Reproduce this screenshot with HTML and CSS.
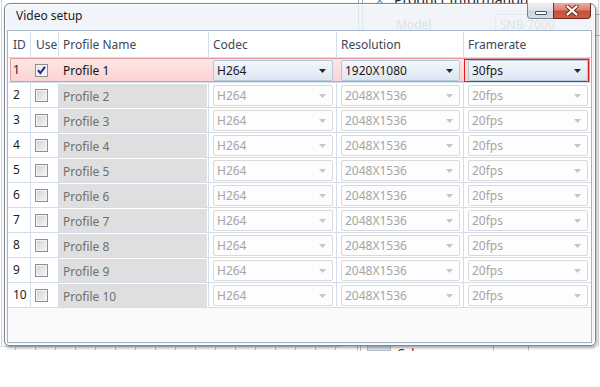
FILE: index.html
```html
<!DOCTYPE html>
<html>
<head>
<meta charset="utf-8">
<title>Video setup</title>
<link rel="stylesheet" href="styles.css">
</head>
<body>
<div class="backdrop">
  <div class="bd-vline bd-v1"></div>
  <div class="bd-vline bd-v2"></div>
  <div class="bd-vline bd-left"></div>
  <div class="bd-vline bd-right"></div>
  <div class="bd-x">×</div>
  <div class="bd-title">Product Information</div>
  <div class="bd-model">Model</div>
  <div class="bd-input">SNB-7000</div>
  <div class="bd-ruler"></div>
  <div class="bd-vline bd-b1"></div>
  <div class="bd-vline bd-b2"></div>
  <div class="bd-box"></div>
  <div class="bd-cal"><span>Cal</span></div>
  <div class="bd-vline bd-b3"></div>
  <div class="bd-vline bd-b4"></div>
</div>

<div class="window">
  <div class="titlebar"><span class="title">Video setup</span></div>
  <div class="caption">
    <div class="cap-btn cap-min"><span class="min-glyph"></span></div>
    <div class="cap-btn cap-close">
      <svg width="14" height="11" viewBox="0 0 14 11"><path d="M2.5 1.5 L11.5 9.5 M11.5 1.5 L2.5 9.5" stroke="#6a2a22" stroke-width="4" stroke-linecap="round"/><path d="M2.5 1.5 L11.5 9.5 M11.5 1.5 L2.5 9.5" stroke="#ffffff" stroke-width="2.2" stroke-linecap="round"/></svg>
    </div>
  </div>
  <div class="client">
    <div class="row head">
      <div class="c c-id">ID</div>
      <div class="c c-use">Use</div>
      <div class="c c-name"><span class="hname">Profile Name</span></div>
      <div class="c c-codec"><span class="hname">Codec</span></div>
      <div class="c c-res"><span class="hname">Resolution</span></div>
      <div class="c c-fps"><span class="hname">Framerate</span></div>
    </div>

    <div class="row sel">
      <div class="c c-id">1</div>
      <div class="c c-use"><span class="cb checked"><svg width="11" height="11" viewBox="0 0 11 11"><path d="M2 5.2 L4.3 8.2 L9 1.8" fill="none" stroke="#1f2a86" stroke-width="2"/></svg></span></div>
      <div class="c c-name"><span class="name-text">Profile 1</span></div>
      <div class="c c-codec"><div class="combo on"><span>H264</span><svg class="arr" width="7" height="4" viewBox="0 0 7 4"><path d="M0 0H7L3.5 4Z"/></svg></div></div>
      <div class="c c-res"><div class="combo on"><span>1920X1080</span><svg class="arr" width="7" height="4" viewBox="0 0 7 4"><path d="M0 0H7L3.5 4Z"/></svg></div></div>
      <div class="c c-fps focus"><div class="combo on"><span>30fps</span><svg class="arr" width="7" height="4" viewBox="0 0 7 4"><path d="M0 0H7L3.5 4Z"/></svg></div></div>
    </div>

    <div class="row">
      <div class="c c-id">2</div>
      <div class="c c-use"><span class="cb"></span></div>
      <div class="c c-name"><span class="name-box">Profile 2</span></div>
      <div class="c c-codec"><div class="combo"><span>H264</span><svg class="arr" width="7" height="4" viewBox="0 0 7 4"><path d="M0 0H7L3.5 4Z"/></svg></div></div>
      <div class="c c-res"><div class="combo"><span>2048X1536</span><svg class="arr" width="7" height="4" viewBox="0 0 7 4"><path d="M0 0H7L3.5 4Z"/></svg></div></div>
      <div class="c c-fps"><div class="combo"><span>20fps</span><svg class="arr" width="7" height="4" viewBox="0 0 7 4"><path d="M0 0H7L3.5 4Z"/></svg></div></div>
    </div>
    <div class="row">
      <div class="c c-id">3</div>
      <div class="c c-use"><span class="cb"></span></div>
      <div class="c c-name"><span class="name-box">Profile 3</span></div>
      <div class="c c-codec"><div class="combo"><span>H264</span><svg class="arr" width="7" height="4" viewBox="0 0 7 4"><path d="M0 0H7L3.5 4Z"/></svg></div></div>
      <div class="c c-res"><div class="combo"><span>2048X1536</span><svg class="arr" width="7" height="4" viewBox="0 0 7 4"><path d="M0 0H7L3.5 4Z"/></svg></div></div>
      <div class="c c-fps"><div class="combo"><span>20fps</span><svg class="arr" width="7" height="4" viewBox="0 0 7 4"><path d="M0 0H7L3.5 4Z"/></svg></div></div>
    </div>
    <div class="row">
      <div class="c c-id">4</div>
      <div class="c c-use"><span class="cb"></span></div>
      <div class="c c-name"><span class="name-box">Profile 4</span></div>
      <div class="c c-codec"><div class="combo"><span>H264</span><svg class="arr" width="7" height="4" viewBox="0 0 7 4"><path d="M0 0H7L3.5 4Z"/></svg></div></div>
      <div class="c c-res"><div class="combo"><span>2048X1536</span><svg class="arr" width="7" height="4" viewBox="0 0 7 4"><path d="M0 0H7L3.5 4Z"/></svg></div></div>
      <div class="c c-fps"><div class="combo"><span>20fps</span><svg class="arr" width="7" height="4" viewBox="0 0 7 4"><path d="M0 0H7L3.5 4Z"/></svg></div></div>
    </div>
    <div class="row">
      <div class="c c-id">5</div>
      <div class="c c-use"><span class="cb"></span></div>
      <div class="c c-name"><span class="name-box">Profile 5</span></div>
      <div class="c c-codec"><div class="combo"><span>H264</span><svg class="arr" width="7" height="4" viewBox="0 0 7 4"><path d="M0 0H7L3.5 4Z"/></svg></div></div>
      <div class="c c-res"><div class="combo"><span>2048X1536</span><svg class="arr" width="7" height="4" viewBox="0 0 7 4"><path d="M0 0H7L3.5 4Z"/></svg></div></div>
      <div class="c c-fps"><div class="combo"><span>20fps</span><svg class="arr" width="7" height="4" viewBox="0 0 7 4"><path d="M0 0H7L3.5 4Z"/></svg></div></div>
    </div>
    <div class="row">
      <div class="c c-id">6</div>
      <div class="c c-use"><span class="cb"></span></div>
      <div class="c c-name"><span class="name-box">Profile 6</span></div>
      <div class="c c-codec"><div class="combo"><span>H264</span><svg class="arr" width="7" height="4" viewBox="0 0 7 4"><path d="M0 0H7L3.5 4Z"/></svg></div></div>
      <div class="c c-res"><div class="combo"><span>2048X1536</span><svg class="arr" width="7" height="4" viewBox="0 0 7 4"><path d="M0 0H7L3.5 4Z"/></svg></div></div>
      <div class="c c-fps"><div class="combo"><span>20fps</span><svg class="arr" width="7" height="4" viewBox="0 0 7 4"><path d="M0 0H7L3.5 4Z"/></svg></div></div>
    </div>
    <div class="row">
      <div class="c c-id">7</div>
      <div class="c c-use"><span class="cb"></span></div>
      <div class="c c-name"><span class="name-box">Profile 7</span></div>
      <div class="c c-codec"><div class="combo"><span>H264</span><svg class="arr" width="7" height="4" viewBox="0 0 7 4"><path d="M0 0H7L3.5 4Z"/></svg></div></div>
      <div class="c c-res"><div class="combo"><span>2048X1536</span><svg class="arr" width="7" height="4" viewBox="0 0 7 4"><path d="M0 0H7L3.5 4Z"/></svg></div></div>
      <div class="c c-fps"><div class="combo"><span>20fps</span><svg class="arr" width="7" height="4" viewBox="0 0 7 4"><path d="M0 0H7L3.5 4Z"/></svg></div></div>
    </div>
    <div class="row">
      <div class="c c-id">8</div>
      <div class="c c-use"><span class="cb"></span></div>
      <div class="c c-name"><span class="name-box">Profile 8</span></div>
      <div class="c c-codec"><div class="combo"><span>H264</span><svg class="arr" width="7" height="4" viewBox="0 0 7 4"><path d="M0 0H7L3.5 4Z"/></svg></div></div>
      <div class="c c-res"><div class="combo"><span>2048X1536</span><svg class="arr" width="7" height="4" viewBox="0 0 7 4"><path d="M0 0H7L3.5 4Z"/></svg></div></div>
      <div class="c c-fps"><div class="combo"><span>20fps</span><svg class="arr" width="7" height="4" viewBox="0 0 7 4"><path d="M0 0H7L3.5 4Z"/></svg></div></div>
    </div>
    <div class="row">
      <div class="c c-id">9</div>
      <div class="c c-use"><span class="cb"></span></div>
      <div class="c c-name"><span class="name-box">Profile 9</span></div>
      <div class="c c-codec"><div class="combo"><span>H264</span><svg class="arr" width="7" height="4" viewBox="0 0 7 4"><path d="M0 0H7L3.5 4Z"/></svg></div></div>
      <div class="c c-res"><div class="combo"><span>2048X1536</span><svg class="arr" width="7" height="4" viewBox="0 0 7 4"><path d="M0 0H7L3.5 4Z"/></svg></div></div>
      <div class="c c-fps"><div class="combo"><span>20fps</span><svg class="arr" width="7" height="4" viewBox="0 0 7 4"><path d="M0 0H7L3.5 4Z"/></svg></div></div>
    </div>
    <div class="row">
      <div class="c c-id">10</div>
      <div class="c c-use"><span class="cb"></span></div>
      <div class="c c-name"><span class="name-box">Profile 10</span></div>
      <div class="c c-codec"><div class="combo"><span>H264</span><svg class="arr" width="7" height="4" viewBox="0 0 7 4"><path d="M0 0H7L3.5 4Z"/></svg></div></div>
      <div class="c c-res"><div class="combo"><span>2048X1536</span><svg class="arr" width="7" height="4" viewBox="0 0 7 4"><path d="M0 0H7L3.5 4Z"/></svg></div></div>
      <div class="c c-fps"><div class="combo"><span>20fps</span><svg class="arr" width="7" height="4" viewBox="0 0 7 4"><path d="M0 0H7L3.5 4Z"/></svg></div></div>
    </div>
  </div>
</div>
</body>
</html>
```

FILE: styles.css
```css
* { box-sizing: border-box; margin: 0; padding: 0; }
html, body { width: 600px; height: 387px; overflow: hidden; }
body {
  position: relative;
  background: #ffffff;
  font-family: "Noto Sans", "Open Sans", sans-serif;
  font-size: 12px;
  color: #1e1e1e;
  padding: 3px 0 0 4px;
}

/* ---------- application behind the dialog ---------- */
.backdrop { position: absolute; left: 0; top: 0; width: 600px; height: 387px; z-index: 0; }
.bd-vline { position: absolute; width: 1px; background: #c9ced6; }
.bd-v1 { left: 358px; top: 0; height: 30px; background: #9aa6b6; }
.bd-v2 { left: 362px; top: 0; height: 30px; background: #9aa6b6; }
.bd-left { left: 1px; top: 0; height: 346px; background: #cfd3d8; }
.bd-right { left: 598px; top: 0; height: 346px; background: #d6d9de; }
.bd-x { position: absolute; left: 376px; top: -9px; font-size: 13px; color: #5a7db0; }
.bd-title { position: absolute; left: 394px; top: -10px; font-size: 14px; color: #2a2a2a; }
.bd-model { position: absolute; left: 396px; top: 17px; font-size: 12px; color: #7d7d7d; line-height: 16px; }
.bd-input {
  position: absolute; left: 495px; top: 14px; width: 110px; height: 22px;
  border: 1px solid #b9bec6; padding: 2px 0 0 4px; font-size: 12px; line-height: 16px; color: #8a8a8a;
}
.bd-ruler {
  position: absolute; left: 0; top: 346px; width: 342px; height: 4px;
  border-top: 1px solid #e2e2e2;
  background: repeating-linear-gradient(90deg, transparent 0 15px, #c4c4c4 15px 16px, transparent 16px 20px);
}
.bd-b1 { left: 357px; top: 345px; height: 6px; background: #b8c2d0; }
.bd-b2 { left: 360px; top: 345px; height: 6px; background: #b8c2d0; }
.bd-box { position: absolute; left: 367px; top: 345px; width: 24px; height: 6px; background: #dfe6ef; border: 1px solid #b8c2d0; border-top: none; }
.bd-cal { position: absolute; left: 397px; top: 346px; height: 5px; overflow: hidden; font-size: 12px; line-height: 16px; color: #333; }
.bd-cal span { display: block; margin-top: 0; }
.bd-b3 { left: 493px; top: 345px; height: 6px; background: #b8c2d0; }
.bd-b4 { left: 528px; top: 345px; height: 6px; background: #b8c2d0; }

/* ---------- dialog window ---------- */
.window {
  position: relative;
  z-index: 1;
  width: 592px;
  height: 343px;
  border: 1px solid #7d8691;
  border-radius: 6px 6px 5px 5px;
  background: rgba(238, 242, 247, 0.84);
  box-shadow: 1px 2px 3px rgba(0, 0, 0, 0.35), inset 0 0 0 1px rgba(255, 255, 255, 0.85);
  padding: 0 3px 2px 2px;
  display: flex;
  flex-direction: column;
}
.titlebar { height: 26px; padding: 4px 0 0 9px; line-height: 16px; }
.title { font-size: 12px; color: #1b1b1b; }

.caption { position: absolute; top: -1px; right: 4px; display: flex; height: 16px; }
.cap-btn { height: 16px; display: flex; align-items: center; justify-content: center; }
.cap-min {
  width: 26px;
  border: 1px solid #7a838e;
  border-top: none;
  border-right: none;
  border-radius: 0 0 0 4px;
  background: linear-gradient(#eef1f5, #dde2e8 50%, #cbd2db 51%, #d8dee5);
}
.min-glyph {
  width: 12px; height: 4px; margin-top: 5px;
  background: #ffffff; border: 1px solid #4b525b; border-radius: 1px;
}
.cap-close {
  width: 38px;
  border: 1px solid #6d2a22;
  border-top: none;
  border-radius: 0 0 4px 0;
  background: linear-gradient(#e9ad9f, #d88371 45%, #c75039 55%, #cc5d44);
}
.cap-close svg { display: block; }

.client {
  width: 585px;
  height: 313px;
  border: 1px solid #a4b4c9;
  background: #fafafa;
  display: flex;
  flex-direction: column;
}

/* ---------- grid ---------- */
.row {
  position: relative;
  display: flex;
  flex: none;
  height: 25px;
  border-bottom: 1px solid #d2deec;
  background: #ffffff;
  line-height: 16px;
}
.row.head { height: 27px; color: #3d4756; padding-top: 1px; }
.c {
  position: relative;
  z-index: 1;
  display: flex;
  align-items: center;
  border-right: 1px solid #d2deec;
  white-space: nowrap;
}
.c-id { width: 23px; padding-left: 5px; }
.c-use { width: 28px; padding-left: 4px; }
.head .c-use { padding-left: 5px; }
.c-name { width: 150px; }
.c-codec { width: 128px; }
.c-res { width: 127px; }
.c-fps { width: 127px; border-right: none; }
.hname { padding-left: 4px; }

.row.sel::before {
  content: "";
  position: absolute;
  left: 2px; right: 1px; top: 0; bottom: 0;
  background: linear-gradient(#fde6e6, #fbd3d3);
  border: 1px solid #e29a9a;
  z-index: 0;
}
.row.sel .c { border-right-color: transparent; }
.c-fps.focus::after {
  content: "";
  position: absolute;
  left: 0; right: 2px; top: 1px; bottom: 0;
  border: 1px solid #e41b1b;
  pointer-events: none;
}

.name-text { padding-left: 4px; color: #151515; padding-top: 2px; }
.name-box {
  align-self: flex-start;
  margin-top: 1px;
  width: 148px;
  height: 23px;
  background: #dfdfdf;
  color: #6f6f6f;
  padding: 5px 0 0 4px;
}

.cb {
  width: 13px; height: 13px;
  border: 1px solid #8f8f8f;
  background: linear-gradient(135deg, #cfd2d6, #f7f7f7);
  box-shadow: inset 0 0 0 1px #f3f3f3;
  display: flex; align-items: center; justify-content: center;
}
.cb.checked { background: linear-gradient(135deg, #e3e6ea, #fbfbfb); }
.cb svg { display: block; }

.combo {
  align-self: flex-start;
  margin: 2px 3px 0 4px;
  flex: 1;
  height: 21px;
  border: 1px solid #d9d9d9;
  border-radius: 2px;
  background: #fdfdfd;
  color: #a5a5a5;
  display: flex;
  align-items: center;
  justify-content: space-between;
  padding: 1px 6px 0 3px;
}
.combo .arr { fill: #c6c6c6; display: block; }
.combo.on {
  border-color: #b7c7da;
  background: linear-gradient(#f4f7fb, #dce6f2);
  color: #1a1a1a;
}
.combo.on .arr { fill: #1f2937; }
```
